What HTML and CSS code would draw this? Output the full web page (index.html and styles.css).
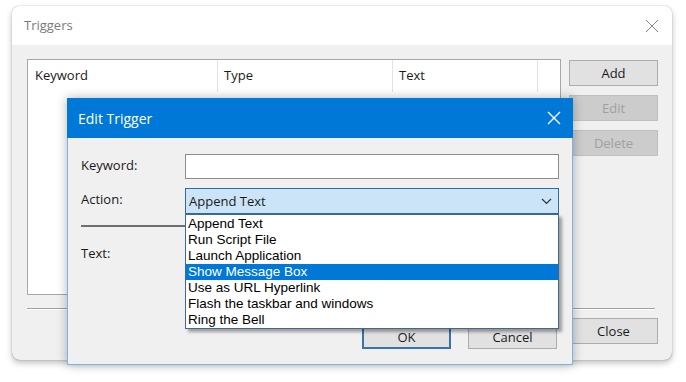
FILE: index.html
```html
<!DOCTYPE html>
<html>
<head>
<meta charset="utf-8">
<link rel="stylesheet" href="styles.css">
</head>
<body>
<div class="window">
  <div class="titlebar">
    <span class="title">Triggers</span>
    <svg class="win-close" width="14" height="14" viewBox="0 0 14 14"><path d="M1 1L13 13M13 1L1 13" stroke="#8a8a8a" stroke-width="1" fill="none"/></svg>
  </div>
  <div class="content">
    <div class="main">
      <div class="listview">
        <div class="lv-header">
          <div class="col c1">Keyword</div>
          <div class="col c2">Type</div>
          <div class="col c3">Text</div>
          <div class="col c4"></div>
        </div>
      </div>
      <div class="side">
        <div class="btn">Add</div>
        <div class="btn disabled">Edit</div>
        <div class="btn disabled">Delete</div>
      </div>
    </div>
    <div class="sep"></div>
    <div class="footer"><div class="btn">Close</div></div>
  </div>

  <div class="dialog">
    <div class="dlg-title">
      <span>Edit Trigger</span>
      <svg class="dlg-close" width="14" height="14" viewBox="0 0 14 14"><path d="M1 1L13 13M13 1L1 13" stroke="#ffffff" stroke-width="1.4" fill="none"/></svg>
    </div>
    <div class="dlg-body">
      <div class="form">
        <div class="label">Keyword:</div>
        <div class="input"></div>
        <div class="label">Action:</div>
        <div class="combo">
          <span>Append Text</span>
          <svg class="chev" width="11" height="7" viewBox="0 0 11 7"><path d="M1 1L5.5 5.5L10 1" stroke="#333" stroke-width="1.2" fill="none"/></svg>
        </div>
        <div class="groupline"></div>
        <div class="label text-label">Text:</div>
      </div>
      <div class="dlg-footer">
        <div class="btn default">OK</div>
        <div class="btn">Cancel</div>
      </div>
    </div>
    <div class="dropdown">
      <div class="item">Append Text</div>
      <div class="item">Run Script File</div>
      <div class="item">Launch Application</div>
      <div class="item selected">Show Message Box</div>
      <div class="item">Use as URL Hyperlink</div>
      <div class="item">Flash the taskbar and windows</div>
      <div class="item">Ring the Bell</div>
    </div>
  </div>
</div>
</body>
</html>
```

FILE: styles.css
```css
html, body {
  margin: 0;
  padding: 0;
  background: #ffffff;
  width: 686px;
  height: 382px;
  overflow: hidden;
  font-family: "Open Sans", "Noto Sans", sans-serif;
  font-size: 13px;
  color: #1a1a1a;
}

.window {
  position: relative;
  margin: 6px 0 0 12px;
  width: 660px;
  height: 354px;
  background: #f0f0f0;
  border-radius: 8px;
  box-shadow: 0 3px 6px rgba(0,0,0,0.25), 0 0 1px rgba(0,0,0,0.5);
  overflow: visible;
}

.titlebar {
  height: 39px;
  background: #ffffff;
  border-radius: 8px 8px 0 0;
  display: flex;
  align-items: center;
  justify-content: space-between;
  padding: 0 13px 0 12px;
  box-sizing: border-box;
}

.title {
  color: #7a7a7a;
  font-size: 13px;
  margin-top: -1px;
}

.content {
  padding: 14px 14px 0 15px;
}

.main {
  display: flex;
  gap: 8px;
}

.listview {
  width: 534px;
  height: 236px;
  box-sizing: border-box;
  background: #ffffff;
  border: 1px solid #a8a8a8;
}

.lv-header {
  display: flex;
  height: 32px;
}

.col {
  box-sizing: border-box;
  border-right: 1px solid #e3e3e3;
  padding-left: 6px;
  line-height: 31px;
}

.c1 { width: 190px; padding-left: 7px; }
.c2 { width: 175px; }
.c3 { width: 145px; }
.c4 { flex: 1; border-right: none; }

.side {
  display: flex;
  flex-direction: column;
  gap: 9px;
  padding-top: 1px;
}

.btn {
  width: 89px;
  height: 26px;
  box-sizing: border-box;
  background: #e1e1e1;
  border: 1px solid #adadad;
  display: flex;
  align-items: center;
  justify-content: center;
  font-size: 13px;
  color: #1a1a1a;
}

.btn.disabled {
  background: #cccccc;
  border-color: #bfbfbf;
  color: #a0a0a0;
}

.btn.default {
  border: 2px solid #3a73a8;
}

.sep {
  margin-top: 13px;
  width: 628px;
  height: 1px;
  background: #a0a0a0;
  border-bottom: 1px solid #ffffff;
}

.footer {
  display: flex;
  justify-content: flex-end;
  margin-top: 8px;
}

/* Edit Trigger dialog */
.dialog {
  position: absolute;
  left: 55px;
  top: 92px;
  width: 506px;
  height: 267px;
  box-sizing: border-box;
  background: #f0f0f0;
  border: 1px solid #7ab4e2;
  border-top: none;
  box-shadow: 0 0 10px rgba(0,0,0,0.3);
  display: flex;
  flex-direction: column;
}

.dlg-title {
  height: 40px;
  margin: 0 -1px;
  background: #0078d7;
  color: #ffffff;
  font-size: 14px;
  display: flex;
  align-items: center;
  justify-content: space-between;
  padding: 0 12px 0 11px;
  flex-shrink: 0;
}

.dlg-body {
  flex: 1;
  display: flex;
  flex-direction: column;
  padding: 16px 15px 15px 13px;
}

.form {
  display: grid;
  grid-template-columns: 104px 374px;
  row-gap: 9px;
  align-items: center;
}

.label {
  font-size: 13px;
  margin-top: -4px;
}

.input {
  height: 25px;
  box-sizing: border-box;
  background: #ffffff;
  border: 1px solid #8c8c8c;
}

.combo {
  height: 26px;
  box-sizing: border-box;
  background: #cce4f7;
  border: 1px solid #2f6b9e;
  display: flex;
  align-items: center;
  justify-content: space-between;
  padding: 0 6px 0 3px;
}

.chev { margin-top: 1px; }

.groupline {
  grid-column: 1 / -1;
  height: 2px;
  background: #6e6e6e;
  margin-top: 2px;
}

.text-label {
  margin-top: 8px;
}

.dlg-footer {
  margin-top: auto;
  display: flex;
  justify-content: flex-end;
  gap: 17px;
}

.dlg-footer .btn {
  height: 24px;
}

.dropdown {
  position: absolute;
  left: 117px;
  top: 116px;
  width: 374px;
  height: 115px;
  box-sizing: border-box;
  background: #ffffff;
  border: 1px solid #3d6a91;
  padding-top: 1px;
  box-shadow: 3px 3px 3px rgba(0,0,0,0.35);
  font-family: "Liberation Sans", Arial, sans-serif;
  font-size: 13.5px;
}

.item {
  height: 16px;
  line-height: 16px;
  padding-left: 2px;
  color: #000000;
  white-space: nowrap;
}

.item.selected {
  background: #0078d7;
  color: #ffffff;
}
```
